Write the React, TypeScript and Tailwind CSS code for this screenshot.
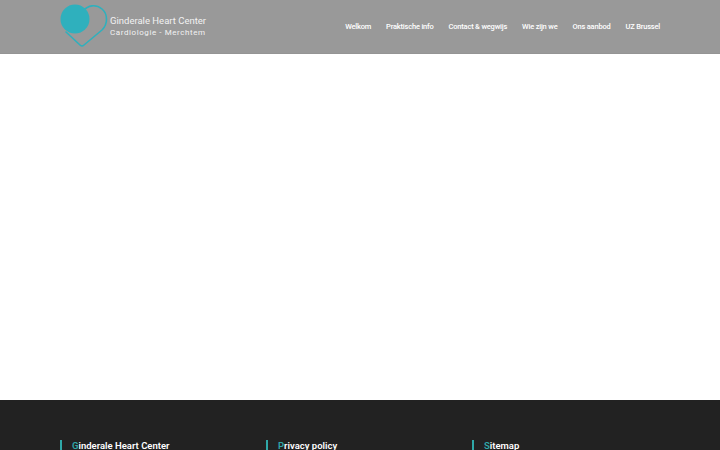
import React from 'react';

const navItems = ['Welkom', 'Praktische info', 'Contact & wegwijs', 'Wie zijn we', 'Ons aanbod', 'UZ Brussel'];
const footerTitles = ['Ginderale Heart Center', 'Privacy policy', 'Sitemap'];

const Logo = () => (
  <svg width="48" height="48" viewBox="0 0 48 48" className="shrink-0" fill="none">
    <path
      d="M6 29 L20 42 Q22 44 24 42 L42 27 C48 21 48 11 42 6 C36 1 28 2 23 8"
      stroke="#2fb0bd"
      strokeWidth="1.6"
      strokeLinecap="round"
      strokeLinejoin="round"
    />
    <circle cx="15" cy="16" r="14.5" fill="#2fb0bd" />
  </svg>
);

const App: React.FC = () => {
  return (
    <div className="h-[450px] overflow-hidden flex flex-col bg-white font-['Roboto','Liberation_Sans',sans-serif]">
      <header className="h-[54px] shrink-0 bg-[#999999] border-b border-[#949494] px-[60px] flex items-start justify-between">
        <div className="flex items-start pt-[3px]">
          <Logo />
          <div className="ml-[2px] pt-[12px] text-[#f2f2f2]">
            <div className="text-[9.5px] leading-[12px]">Ginderale Heart Center</div>
            <div className="text-[8px] leading-[12px] tracking-[0.58px]">Cardiologie - Merchtem</div>
          </div>
        </div>
        <nav className="flex gap-[15px] pt-[21px]">
          {navItems.map((item) => (
            <a key={item} className="text-[7.5px] leading-[12px] font-medium tracking-[-0.2px] text-white whitespace-nowrap">
              {item}
            </a>
          ))}
        </nav>
      </header>
      <main className="h-[346px] shrink-0" />
      <footer className="flex-1 bg-[#222222] px-[60px] pt-[40px] grid grid-cols-3 gap-[18px]">
        {footerTitles.map((title) => (
          <div key={title} className="border-l-2 border-[#2fa8a8] pl-[10px] h-[30px]">
            <h3 className="text-[9.5px] leading-[12px] font-semibold text-white whitespace-nowrap">
              <span className="text-[#2fa8a8]">{title[0]}</span>
              {title.slice(1)}
            </h3>
          </div>
        ))}
      </footer>
    </div>
  );
};

export default App;
